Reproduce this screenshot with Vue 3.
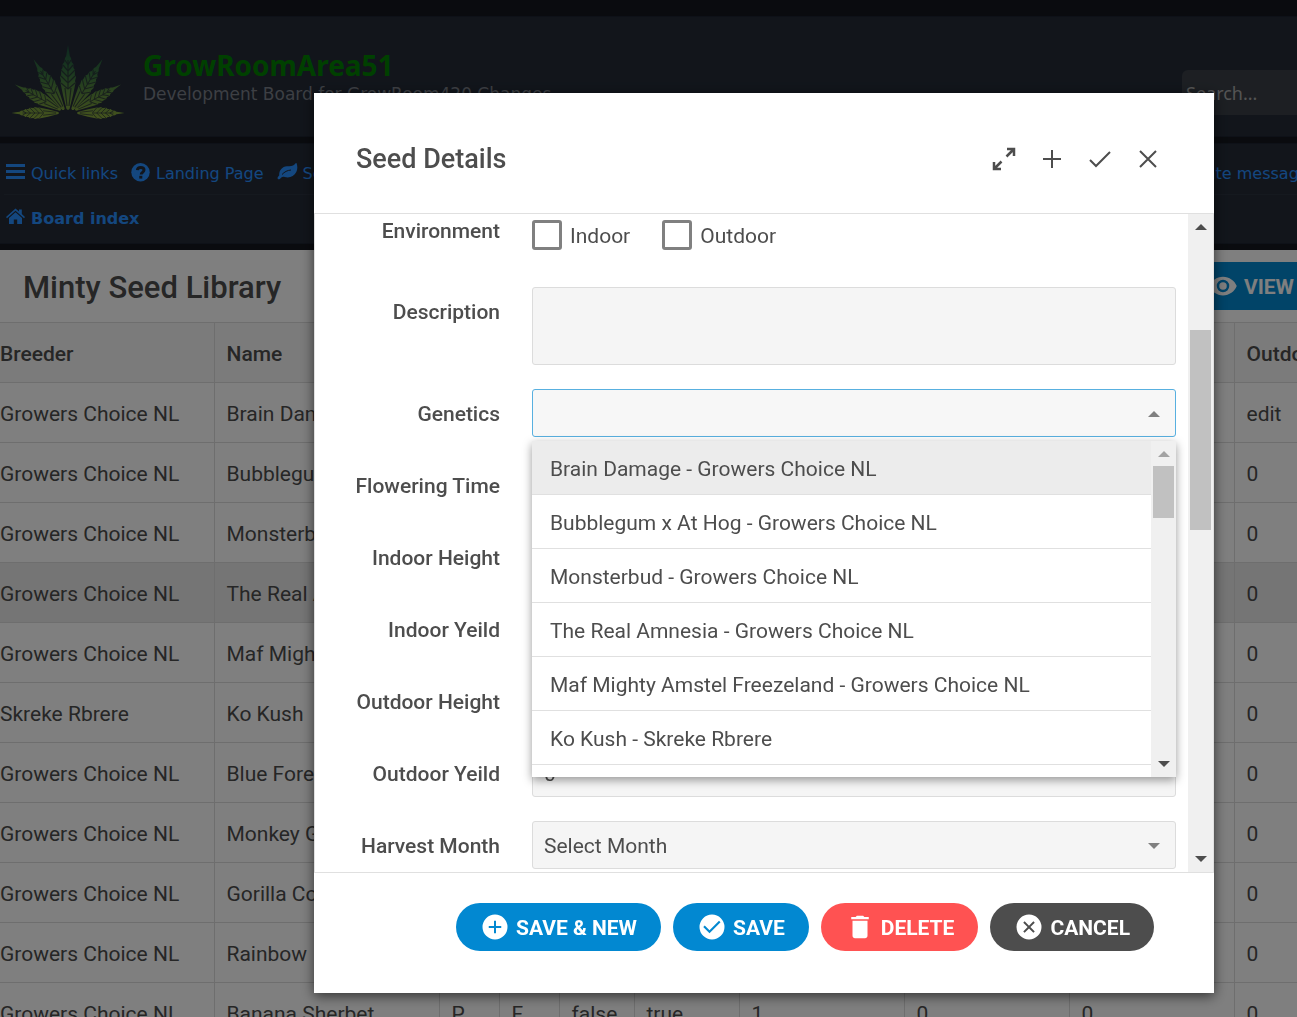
<script setup>
const links = [
  { icon: 'bars', text: 'Quick links' },
  { icon: 'help', text: 'Landing Page' },
  { icon: 'leaf', text: 'Seeds' },
]

const leaflets = [
  'translate(68 110)',
  'translate(64 110) rotate(-31) scale(.9 .91)',
  'translate(72 110) rotate(31) scale(.9 .91)',
  'translate(61 110) rotate(-61) scale(.8 .81)',
  'translate(75 110) rotate(61) scale(.8 .81)',
  'translate(59 113) rotate(-90) scale(.74 .73)',
  'translate(77 113) rotate(90) scale(.74 .73)',
]

const rows = [
  ['Growers Choice NL', 'Brain Damage', '', '', '', '', '', '', '', 'edit'],
  ['Growers Choice NL', 'Bubblegum x At Hog', '', '', '', '', '', '', '', '0'],
  ['Growers Choice NL', 'Monsterbud', '', '', '', '', '', '', '', '0'],
  ['Growers Choice NL', 'The Real Amnesia', '', '', '', '', '', '', '', '0'],
  ['Growers Choice NL', 'Maf Mighty Amstel', '', '', '', '', '', '', '', '0'],
  ['Skreke Rbrere', 'Ko Kush', '', '', '', '', '', '', '', '0'],
  ['Growers Choice NL', 'Blue Forest', '', '', '', '', '', '', '', '0'],
  ['Growers Choice NL', 'Monkey Glue', '', '', '', '', '', '', '', '0'],
  ['Growers Choice NL', 'Gorilla Cookies', '', '', '', '', '', '', '', '0'],
  ['Growers Choice NL', 'Rainbow', '', '', '', '', '', '', '', '0'],
  ['Growers Choice NL', 'Banana Sherbet', 'P', 'F', 'false', 'true', '1', '0', '0', '0'],
]
const selectedRow = 3

const genetics = [
  'Brain Damage - Growers Choice NL',
  'Bubblegum x At Hog - Growers Choice NL',
  'Monsterbud - Growers Choice NL',
  'The Real Amnesia - Growers Choice NL',
  'Maf Mighty Amstel Freezeland - Growers Choice NL',
  'Ko Kush - Skreke Rbrere',
]

const measures = [
  { id: 'flowering', label: 'Flowering Time' },
  { id: 'indoor-height', label: 'Indoor Height' },
  { id: 'indoor-yeild', label: 'Indoor Yeild' },
  { id: 'outdoor-height', label: 'Outdoor Height' },
  { id: 'outdoor-yeild', label: 'Outdoor Yeild' },
]

const actions = [
  {
    text: 'Save & New', tone: 'primary',
    path: 'M12 2a10 10 0 1 0 0 20 10 10 0 0 0 0-20zm5 10.800h-4.200V17h-1.600v-4.200H7v-1.600h4.200V7h1.600v4.200H17z',
  },
  {
    text: 'Save', tone: 'primary',
    path: 'M12 2a10 10 0 1 0 0 20 10 10 0 0 0 0-20zm-2 15-5-5 1.200-1.200 3.800 3.800 7.600-7.600L18.800 8.200z',
  },
  {
    text: 'Delete', tone: 'danger',
    path: 'M6 19c0 1.100.9 2 2 2h8c1.100 0 2-.9 2-2V7H6zM19 4h-3.500l-1-1h-5l-1 1H5v1.800h14z',
  },
  {
    text: 'Cancel', tone: 'neutral',
    path: 'M12 2a10 10 0 1 0 0 20 10 10 0 0 0 0-20zm4.600 13.500-1.100 1.100-3.500-3.500-3.500 3.500-1.100-1.100 3.500-3.500-3.500-3.500 1.100-1.100 3.500 3.500 3.500-3.500 1.100 1.100-3.500 3.500z',
  },
]
</script>

<template>
  <div class="page">
    <header class="banner">
      <a class="logo" href="#" aria-label="Home">
        <svg width="136" height="76" viewBox="0 44 136 76">
          <defs>
            <linearGradient id="leaf-fill" x1="0" y1="0" x2="0" y2="1">
              <stop offset="0" stop-color="#1c5040" />
              <stop offset=".4" stop-color="#3a7440" />
              <stop offset="1" stop-color="#8ca83c" />
            </linearGradient>
            <mask id="leaf-mask" maskUnits="userSpaceOnUse" x="0" y="40" width="136" height="84">
              <g v-for="t in leaflets" :key="t" :transform="t">
                <path
                  fill="#fff"
                  d="M0 0-1.500-1-5-15-7.500-27-7-29-8-33-6.800-35-7-40-5.500-42-5.300-46-3.600-48-3-52-1.800-54-1-59 0-65 1-59 1.800-54 3-52 3.600-48 5.300-46 5.500-42 7-40 6.800-35 8-33 7-29 7.500-27 5-15 1.500-1z"
                />
                <path
                  fill="none" stroke="#000" stroke-opacity=".75" stroke-width="1.200"
                  d="M0-22v-28M-1-4l-2-18M1-4l2-18M0-21l-7-6M0-21l7-6M0-27l-7-7M0-27l7-7M0-33l-7-7M0-33l7-7M0-39l-5-6M0-39l5-6M0-45l-3-5M0-45l3-5"
                />
              </g>
            </mask>
          </defs>
          <rect y="44" width="136" height="76" fill="url(#leaf-fill)" mask="url(#leaf-mask)" />
        </svg>
      </a>
      <div class="site">
        <h1>GrowRoomArea51</h1>
        <p>Development Board for GrowRoom420 Changes</p>
      </div>
      <input class="search" type="search" placeholder="Search..." aria-label="Search">
    </header>

    <nav class="navbar">
      <div class="nav-row">
        <a v-for="l in links" :key="l.text" href="#">
          <svg v-if="l.icon === 'bars'" width="20" height="20" viewBox="0 0 20 20">
            <path d="M0 1h19v3H0zM0 7h19v3H0zM0 13h19v3H0z" />
          </svg>
          <svg v-else-if="l.icon === 'help'" width="20" height="20" viewBox="0 0 20 20">
            <circle cx="9.500" cy="9.200" r="9.200" />
            <path class="cut" d="M6.400 7.200C6.600 5 8 4.400 9.700 4.400c1.900 0 3.300 1 3.300 2.700 0 2.300-2.800 2.200-2.800 4.300" />
            <path class="dot" d="M8.300 12.800h3v2.800h-3z" />
          </svg>
          <svg v-else width="21" height="20" viewBox="0 0 21 20">
            <path d="M19.500 0c1 3 1.300 6-.2 9-2.200 4.500-7 6.300-11.500 5-1.600-.5-2.800-.3-4 .9-.8.9-2 2-2.900 1-1-1.200.5-2.300 1.300-3.300C2 7.300 5 3.700 10 3.300c3.200-.2 5.800.2 7.500-1.800.6-.7 1-1.500 2-1.500z" />
            <path class="vein" d="M5 11.500C7.500 8.800 10.300 7.300 14 7" />
          </svg>
          <span>{{ l.text }}</span>
        </a>
        <a class="messages" href="#">Private messages</a>
      </div>
      <div class="nav-row crumbs">
        <a href="#">
          <svg width="20" height="20" viewBox="0 0 20 20">
            <path d="M9.500 4.300 16 10v6h-4.800v-4.500H7.800V16H3v-6zM9.500.5 13 3.600V1.500h2.800v4.600L19 9l-1 1.200L9.500 2.800 1 10.200 0 9z" />
          </svg>
          <span>Board index</span>
        </a>
      </div>
    </nav>

    <main class="library">
      <div class="toolbar">
        <h2>Minty Seed Library</h2>
        <button class="view" type="button">
          <svg width="30" height="30" viewBox="0 0 24 24">
            <path d="M12 4.500C7 4.500 2.700 7.600 1 12c1.700 4.400 6 7.500 11 7.500s9.300-3.100 11-7.500c-1.700-4.400-6-7.500-11-7.500zM12 17a5 5 0 1 1 0-10 5 5 0 0 1 0 10zm0-8a3 3 0 1 0 0 6 3 3 0 0 0 0-6z" />
          </svg>
          <span>View</span>
        </button>
      </div>
      <table>
        <colgroup>
          <col class="w-first"><col class="w-name"><col class="w-s"><col class="w-s"><col class="w-m">
          <col class="w-l"><col class="w-xl"><col class="w-xl"><col class="w-xl"><col>
        </colgroup>
        <thead>
          <tr>
            <th>Breeder</th><th>Name</th><th v-for="n in 7" :key="n" /><th>Outdoor</th>
          </tr>
        </thead>
        <tbody>
          <tr v-for="(r, i) in rows" :key="i" :class="{ selected: i === selectedRow }">
            <td v-for="(c, j) in r" :key="j">{{ c }}</td>
          </tr>
        </tbody>
      </table>
    </main>

    <div class="overlay">
      <section class="dialog" role="dialog" aria-labelledby="dialog-title">
        <header class="dialog-head">
          <h2 id="dialog-title">Seed Details</h2>
          <button type="button" aria-label="Expand">
            <svg width="30" height="30" viewBox="0 0 30 30">
              <path class="bold" d="m17.500 12.500 7.500-7.500M18 5h7v7M12.500 17.500 5 25M5 18v7h7" />
            </svg>
          </button>
          <button type="button" aria-label="Add">
            <svg width="30" height="30" viewBox="0 0 30 30"><path d="M15 6v18M6 15h18" /></svg>
          </button>
          <button type="button" aria-label="Apply">
            <svg width="30" height="30" viewBox="0 0 30 30"><path d="m5 16 6 6L25 8" /></svg>
          </button>
          <button type="button" aria-label="Close">
            <svg width="30" height="30" viewBox="0 0 30 30"><path d="m7 7 16 16M23 7 7 23" /></svg>
          </button>
        </header>

        <div class="dialog-body">
          <form class="fields" @submit.prevent>
            <div class="field environment" role="group" aria-labelledby="env-label">
              <span id="env-label" class="label">Environment</span>
              <div class="checks">
                <label><input type="checkbox"><span>Indoor</span></label>
                <label><input type="checkbox"><span>Outdoor</span></label>
              </div>
            </div>
            <div class="field">
              <label class="label" for="description">Description</label>
              <textarea id="description" class="control" />
            </div>
            <div class="field">
              <label class="label" for="genetics">Genetics</label>
              <div class="picker open">
                <select id="genetics" class="control"><option value="" /></select>
                <svg class="caret" width="12" height="6" viewBox="0 0 12 6"><path d="M0 6 6 0l6 6z" /></svg>
                <div class="menu">
                  <ul role="listbox" aria-label="Genetics">
                    <li v-for="(g, i) in genetics" :key="g" role="option" :aria-selected="i === 0">{{ g }}</li>
                    <li role="option" aria-selected="false" />
                  </ul>
                  <div class="scrollbar">
                    <svg class="off" width="12" height="6" viewBox="0 0 12 6"><path d="M0 6 6 0l6 6z" /></svg>
                    <span class="thumb menu-thumb" />
                    <svg width="12" height="6" viewBox="0 0 12 6"><path d="M0 0h12L6 6z" /></svg>
                  </div>
                </div>
              </div>
            </div>
            <div v-for="m in measures" :key="m.id" class="field">
              <label class="label" :for="m.id">{{ m.label }}</label>
              <input :id="m.id" class="control" type="text" value="0">
            </div>
            <div class="field">
              <label class="label" for="harvest">Harvest Month</label>
              <div class="picker">
                <select id="harvest" class="control"><option>Select Month</option></select>
                <svg class="caret" width="12" height="6" viewBox="0 0 12 6"><path d="M0 0h12L6 6z" /></svg>
              </div>
            </div>
          </form>
          <div class="scrollbar">
            <svg width="12" height="6" viewBox="0 0 12 6"><path d="M0 6 6 0l6 6z" /></svg>
            <span class="thumb body-thumb" />
            <svg width="12" height="6" viewBox="0 0 12 6"><path d="M0 0h12L6 6z" /></svg>
          </div>
        </div>

        <footer class="dialog-foot">
          <button v-for="a in actions" :key="a.text" type="button" :class="a.tone">
            <svg width="30" height="30" viewBox="0 0 24 24"><path :d="a.path" /></svg>
            <span>{{ a.text }}</span>
          </button>
        </footer>
      </section>
    </div>
  </div>
</template>

<style>
body {
  margin: 0;
  overflow: hidden;
}
</style>

<style scoped>
* {
  box-sizing: border-box;
}
.page {
  height: 100vh;
  overflow: hidden;
  padding-top: 16px;
  background: #14171e;
  font-family: Roboto, sans-serif;
  font-size: 21px;
  color: #4d4d4d;
}
h1, h2, p, ul {
  margin: 0;
  padding: 0;
}
button {
  border: 0;
  padding: 0;
  font: inherit;
  cursor: pointer;
}
.banner {
  display: flex;
  height: 121px;
  border: solid #1c2330;
  border-width: 1px 0;
  background: #242b37;
  font-family: Verdana, "DejaVu Sans", sans-serif;
}
.logo {
  margin-top: 27px;
  flex: none;
}
.logo svg {
  display: block;
}
.site {
  flex: 1;
  padding: 30px 0 0 7px;
  white-space: nowrap;
}
.site h1 {
  font: 700 28px/36px "Trebuchet MS", "Noto Sans", sans-serif;
  color: #008000;
}
.site p {
  font-size: 17px;
  line-height: 22px;
  color: #7a7f88;
}
.search {
  flex: none;
  width: 115px;
  height: 45px;
  margin-top: 53px;
  padding: 0 4px;
  border: 0;
  border-radius: 6px 0 0 6px;
  background: #3a3f47;
  font: 18px "Noto Sans", sans-serif;
}
.search::placeholder {
  color: #a8a8a8;
  opacity: 1;
}
.navbar {
  height: 101px;
  margin: 6px 0;
  padding-left: 4px;
  border: solid #1c2330;
  border-width: 1px 0;
  background: #242b37;
  font: 16px "DejaVu Sans", sans-serif;
}
.nav-row {
  display: flex;
  gap: 13px;
  height: 51px;
  padding: 8px 0 0 2px;
  border-bottom: 1px solid #2b323f;
  overflow: hidden;
}
.nav-row.crumbs {
  height: 46px;
  padding-top: 0;
  border: 0;
  font-weight: 700;
}
.nav-row a {
  display: flex;
  align-items: center;
  gap: 5px;
  color: #288fff;
  text-decoration: none;
  white-space: nowrap;
}
.nav-row span, .nav-row .messages {
  padding-top: 1px;
}
.nav-row svg {
  fill: #288fff;
}
.nav-row .cut, .nav-row .vein {
  fill: none;
  stroke: #242b37;
  stroke-width: 3;
}
.nav-row .vein {
  stroke-width: 1;
}
.nav-row .dot {
  fill: #242b37;
}
.nav-row .messages {
  margin: 0 -20px 0 auto;
}
.library {
  background: #fff;
}
.toolbar {
  display: flex;
  align-items: center;
  justify-content: space-between;
  height: 72px;
  padding-left: 23px;
}
.toolbar h2 {
  padding-top: 2px;
  font-size: 31px;
  font-weight: 500;
}
.view {
  display: flex;
  align-items: center;
  gap: 6px;
  height: 48px;
  padding: 0 3px 0 24px;
  background: #0288d1;
  color: #fff;
  font-weight: 700;
  text-transform: uppercase;
}
.view span, .checks span, .dialog-foot span {
  padding-top: 2px;
}
.view svg {
  fill: #fff;
}
table {
  width: 100%;
  table-layout: fixed;
  border-collapse: collapse;
}
.w-first { width: 214px; }
.w-name { width: 225px; }
.w-s { width: 60px; }
.w-m { width: 75px; }
.w-l { width: 105px; }
.w-xl { width: 165px; }
th, td {
  height: 60px;
  padding: 2px 0 0 12px;
  border: solid #ddd;
  border-width: 1px 1px 1px 0;
  text-align: left;
  white-space: nowrap;
  overflow: hidden;
}
th {
  background: #f6f6f6;
  font-weight: 500;
}
th:first-child, td:first-child {
  padding-left: 0;
}
th:last-child, td:last-child {
  border-right: 0;
}
.selected {
  background: #ebebeb;
}
.overlay {
  position: fixed;
  inset: 0;
  padding: 93px 83px 24px 314px;
  background: rgba(0, 0, 0, .5);
}
.dialog {
  display: flex;
  flex-direction: column;
  height: 100%;
  background: #fff;
  box-shadow: 0 3px 12px rgba(0, 0, 0, .6);
}
.dialog-head {
  display: flex;
  align-items: center;
  flex: none;
  height: 121px;
  padding: 11px 42px 0;
  border-bottom: 1px solid #e0e0e0;
}
.dialog-head h2 {
  flex: 1;
  font-size: 27px;
  font-weight: 500;
}
.dialog-head button {
  display: flex;
  align-items: center;
  justify-content: center;
  width: 48px;
  height: 48px;
  background: none;
}
.dialog-head svg {
  fill: none;
  stroke: #4d4d4d;
  stroke-width: 2;
}
.dialog-head .bold {
  stroke-width: 2.5;
}
.dialog-body {
  display: flex;
  flex: 1;
  min-height: 0;
  border: solid #e0e0e0;
  border-width: 0 1px;
}
.fields {
  display: flex;
  flex-direction: column;
  flex: 1;
  gap: 24px;
  padding-right: 12px;
  overflow: hidden;
}
.field {
  display: flex;
  gap: 32px;
}
.label {
  flex: none;
  width: 185px;
  height: 48px;
  line-height: 50px;
  font-weight: 500;
  text-align: right;
}
.environment {
  height: 49px;
}
.environment .label {
  line-height: 34px;
}
.checks {
  display: flex;
  gap: 32px;
  padding-top: 6px;
}
.checks label {
  display: flex;
  align-items: center;
  gap: 8px;
  height: 30px;
}
.checks input {
  appearance: none;
  width: 30px;
  height: 30px;
  margin: 0;
  border: 3px solid #808080;
  border-radius: 3px;
}
.control {
  display: block;
  width: 100%;
  height: 48px;
  margin: 0;
  padding: 2px 11px 0;
  border: 1px solid #dcdcdc;
  border-radius: 3px;
  outline: 0;
  background: #f5f5f5;
  color: inherit;
  font: inherit;
  appearance: none;
  resize: none;
}
textarea.control {
  height: 78px;
}
.picker {
  position: relative;
  flex: 1;
}
.open .control {
  border-color: #58b0e0;
  background: #f7f7f7;
}
.caret {
  position: absolute;
  top: 22px;
  right: 16px;
  fill: #808080;
}
.menu {
  position: absolute;
  top: 52px;
  left: 0;
  right: 0;
  z-index: 1;
  display: flex;
  height: 336px;
  background: #fff;
  box-shadow: 0 3px 9px rgba(0, 0, 0, .4);
}
.menu ul {
  flex: 1;
  overflow: hidden;
  list-style: none;
}
.menu li {
  height: 54px;
  padding-left: 18px;
  border-bottom: 1px solid #e0e0e0;
  line-height: 56px;
}
.menu li[aria-selected="true"] {
  background: #ececec;
}
.scrollbar {
  display: flex;
  flex-direction: column;
  align-items: center;
  flex: none;
  width: 25px;
  padding: 10px 0;
  background: #f0f0f0;
}
.scrollbar svg {
  flex: none;
  fill: #4d4d4d;
}
.scrollbar .off {
  fill: #a3a3a3;
}
.thumb {
  width: 21px;
  margin-bottom: auto;
  background: #c1c1c1;
}
.menu-thumb {
  height: 52px;
  margin-top: 9px;
}
.body-thumb {
  height: 200px;
  margin-top: 100px;
}
.dialog-foot {
  display: flex;
  justify-content: flex-end;
  flex: none;
  gap: 12px;
  height: 121px;
  padding: 30px 60px 0;
  border-top: 1px solid #e0e0e0;
}
.dialog-foot button {
  display: flex;
  align-items: center;
  gap: 6px;
  height: 48px;
  padding: 0 24px;
  border-radius: 24px;
  color: #fff;
  font-weight: 700;
  text-transform: uppercase;
  white-space: nowrap;
}
.dialog-foot svg {
  fill: #fff;
}
.primary { background: #0288d1; }
.danger { background: #ff5252; }
.neutral { background: #4d4d4d; }
</style>
